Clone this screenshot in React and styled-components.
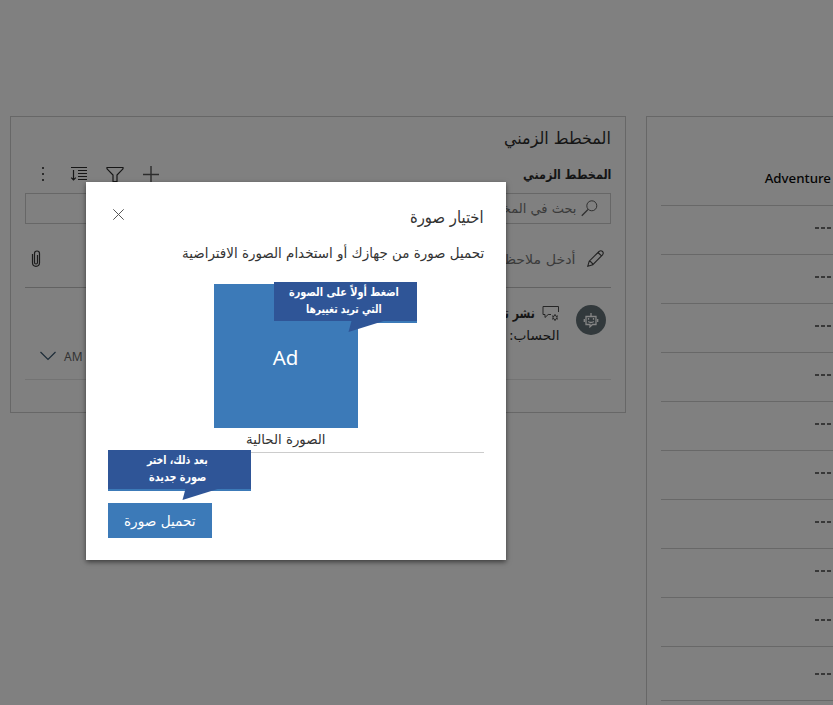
import React, { useLayoutEffect, useRef, useState } from "react";
import styled, { createGlobalStyle } from "styled-components";

const Global = createGlobalStyle`
  * { box-sizing: border-box; }
  html, body { margin: 0; height: 100%; overflow: hidden; background: #808080; }
  body { font-family: "Segoe UI", "Noto Sans", "DejaVu Sans", sans-serif; }
`;

const Page = styled.div`
  position: relative;
  width: 833px;
  height: 705px;
  padding: 116px 0 0 10px;
  display: flex;
  align-items: flex-start;
  gap: 20px;
  overflow: hidden;
  background: #808080;
  color: #151515;
`;

const TimelineCard = styled.section`
  width: 616px;
  height: 297px;
  flex: none;
  border: 1px solid #676767;
  padding: 9px 14px 0;
  display: flex;
  flex-direction: column;
`;

const Line = styled.div`
  display: flex;
  align-items: center;
  direction: rtl;
  height: ${(p) => p.$h}px;
  flex: none;
`;

const TitleLine = styled(Line)`
  justify-content: flex-start;
`;

const ToolLine = styled(Line)`
  justify-content: space-between;
  padding-top: 5px;
`;

const Tools = styled.div`
  direction: ltr;
  display: flex;
  align-items: center;
  gap: 18px;
  padding-left: 9px;
`;

const SearchField = styled(Line)`
  border: 1px solid #676767;
  padding: 0 12px 0 0;
  gap: 5px;
  color: #3b3b3b;
`;

const NoteLine = styled(Line)`
  justify-content: space-between;
  border-bottom: 1px solid #626262;
  padding: 6px 7px 0 5px;
  color: #3b3b3b;
`;

const NoteHint = styled.div`
  display: flex;
  align-items: center;
  gap: 11px;
`;

const Entry = styled.div`
  direction: rtl;
  height: 92px;
  border-bottom: 1px solid #737373;
  padding: 15px 5px 0 15px;
  display: flex;
  gap: 16px;
`;

const Avatar = styled.div`
  width: 30px;
  height: 30px;
  margin-top: 2px;
  border-radius: 50%;
  background: #32393c;
  display: grid;
  place-items: center;
`;

const EntryBody = styled.div`
  flex: 1;
  display: flex;
  flex-direction: column;
`;

const EntryTitle = styled.div`
  display: flex;
  align-items: center;
  height: 20px;
  gap: 7px;
`;

const EntryTime = styled.div`
  direction: ltr;
  display: flex;
  align-items: center;
  gap: 8px;
  height: 20px;
  margin-top: -1px;
  font-size: 12px;
  color: #333;
`;

const RecordCard = styled.section`
  width: 300px;
  height: 700px;
  flex: none;
  border: 1px solid #676767;
  padding: 33px 0 0 14px;
`;

const RecordRow = styled.div`
  width: 172px;
  height: ${(p) => p.$h || 49}px;
  border-bottom: 1px solid #686868;
  display: flex;
  align-items: center;
  justify-content: flex-end;
  padding: 0 2px ${(p) => p.$lift ?? 5}px 0;
`;

const RecordHead = styled(RecordRow)`
  height: 56px;
  padding: 0 2px 0 0;
  font: 500 13.3px "Noto Sans", sans-serif;
  color: #050505;
`;

const Dash = styled.i`
  display: block;
  width: 4px;
  height: 2px;
  background: #383838;
  margin-left: 2px;
`;

const Dialog = styled.div`
  position: absolute;
  left: 86px;
  top: 182px;
  width: 420px;
  height: 378px;
  padding: 22px;
  background: #fff;
  box-shadow: 0 2px 5px rgba(0, 0, 0, 0.55);
  color: #333;
  display: flex;
  flex-direction: column;
`;

const DialogHead = styled(Line)`
  justify-content: space-between;
  align-items: flex-start;
  padding: 1px 0 0 5px;
`;

const CloseButton = styled.button`
  border: 0;
  padding: 4px 0 0;
  background: none;
  display: flex;
`;

const Description = styled(Line)`
  padding-top: 14px;
`;

const Current = styled.div`
  height: 171px;
  margin-top: 18px;
  padding-left: 106px;
  border-bottom: 1px solid #ccc;
  display: flex;
  flex-direction: column;
`;

const Tile = styled.div`
  position: relative;
  width: 144px;
  height: 144px;
  padding: 2px 1px 0 0;
  background: #3c7ab8;
  color: #fff;
  font: 20.5px "Noto Sans", sans-serif;
  display: grid;
  place-items: center;
`;

const Caption = styled(Line)`
  width: 144px;
  justify-content: center;
`;

const Actions = styled.div`
  position: relative;
  margin-top: 50px;
  display: flex;
`;

const UploadButton = styled.button`
  width: 104px;
  height: 35px;
  border: 0;
  padding: 0;
  background: #3c7ab8;
  color: #fff;
  font-family: inherit;
  display: flex;
  align-items: center;
  justify-content: center;
`;

const Callout = styled.div`
  position: absolute;
  left: ${(p) => p.$x}px;
  top: ${(p) => p.$y}px;
  width: 143px;
  height: 41px;
  padding: 2px 4px 0 0;
  background: #2f5597;
  border-bottom: 2px solid #3c7ab8;
  color: #fff;
  display: flex;
  flex-direction: column;
  align-items: center;
`;

const Tail = styled.svg`
  position: absolute;
  left: 74px;
  top: 37px;
`;

const Slot = styled.span`
  display: flex;
  flex: none;
  direction: rtl;
  width: ${(p) => p.$w}px;
  height: ${(p) => p.$lh || 17}px;
  line-height: ${(p) => p.$lh || 17}px;
  font-size: ${(p) => p.$size}px;
  font-weight: ${(p) => (p.$bold ? 700 : 400)};
  font-family: "DejaVu Sans", sans-serif;
`;

const Glyphs = styled.span`
  flex: none;
  white-space: nowrap;
  transform-origin: right center;
`;

// Condenses an Arabic label horizontally so that it fills its slot.
function Label({ w, size = 13.5, lh, bold, children }) {
  const ref = useRef(null);
  const [k, setK] = useState(1);
  useLayoutEffect(() => {
    setK(w / ref.current.offsetWidth);
  }, [w, size, children]);
  return (
    <Slot $w={w} $size={size} $lh={lh} $bold={bold}>
      <Glyphs ref={ref} style={{ transform: `scaleX(${k})` }}>{children}</Glyphs>
    </Slot>
  );
}

const Icon = styled.svg`
  display: block;
  flex: none;
  fill: none;
  stroke: ${(p) => p.$c || "#161616"};
  stroke-width: ${(p) => p.$sw || 1};
`;

const MoreIcon = () => (
  <Icon width="18" height="18" viewBox="0 0 18 18" $c="#2c2c2c">
    <path d="M8 3h2M8 9h2M8 15h2" strokeWidth="2" />
  </Icon>
);
const SortIcon = () => (
  <Icon width="18" height="18" viewBox="0 0 18 18" $sw="1.2">
    <path d="M1 2.5h16M8 5.5h9M8 8.5h9M8 11.5h9M8 14.5h9M3.5 5v10M1.2 12.7l2.3 2.3 2.3-2.3" />
  </Icon>
);
const FilterIcon = () => (
  <Icon width="18" height="18" viewBox="0 0 18 18" $sw="1.2">
    <path d="M1 2.5h16v1.3L11 10v6.5H7V10L1 3.8z" />
  </Icon>
);
const PlusIcon = () => (
  <Icon width="18" height="18" viewBox="0 0 18 18" $c="#2c2c2c" $sw="1.4">
    <path d="M1 9.5h16M9 1v16" />
  </Icon>
);
const SearchIcon = () => (
  <Icon width="17" height="17" viewBox="0 0 17 17" $c="#303030">
    <circle cx="10.8" cy="5.8" r="5" />
    <path d="M7 9.5L.8 15.8" strokeWidth="1.3" />
  </Icon>
);
const PencilIcon = () => (
  <Icon width="17" height="17" viewBox="0 0 17 17" $c="#222" $sw="1.1">
    <path d="M.8 16.2l1.4-5L12 1.5q2-1.5 3.5 0t0 3.4L5.8 14.7zM2.2 11.2q2.8.3 3.6 3.5M11 2.5l3.5 3.4" />
  </Icon>
);
const ClipIcon = () => (
  <Icon width="12" height="18" viewBox="0 0 12 18" $c="#1b1b1b" $sw="1.2">
    <path d="M2.5 4v8.8a3.5 3.5 0 0 0 7 0V3.5a2.5 2.5 0 0 0-5 0v9a1.5 1.5 0 0 0 3 0V5" />
  </Icon>
);
const PostIcon = () => (
  <Icon width="18" height="18" viewBox="0 0 18 18" $c="#262626">
    <path d="M9 10.5H6.2L3 13.5v-3H1v-8h15.5V8" />
    <circle cx="13" cy="13.5" r="2" />
    <path d="M13 10v1.5M13 15.5V17M10 11.8l1.3.7M14.7 14.5l1.3.7M10 15.2l1.3-.7M14.7 12.5l1.3-.7" />
  </Icon>
);
const BotIcon = () => (
  <Icon width="16" height="16" viewBox="0 0 16 16" $c="#858585" $sw="1.3">
    <path d="M3 4.5h10v8H9.5L7 14.8v-2.3H3zM8 1v3.5M1.3 7v3M14.7 7v3M5.2 9.5q2.8 2 5.6 0" />
    <path d="M5.5 6v1.8M10.5 6v1.8" />
  </Icon>
);
const ChevronIcon = () => (
  <Icon width="16" height="10" viewBox="0 0 16 10" $c="#1d2c38" $sw="1.2">
    <path d="M.5 1L8 8.5 15.5 1" />
  </Icon>
);
const CloseIcon = () => (
  <Icon width="11" height="11" viewBox="0 0 11 11" $c="#555">
    <path d="M.3.3l10.4 10.4M10.7.3L.3 10.7" />
  </Icon>
);

const CalloutTail = () => (
  <Tail width="46" height="14" viewBox="0 0 46 14">
    <path d="M4 0L.5 13 42 0z" fill="#2f5597" />
  </Tail>
);

const Dashes = () => (
  <>
    <Dash />
    <Dash />
    <Dash />
  </>
);

export default function App() {
  return (
    <>
      <Global />
      <Page>
        <TimelineCard>
          <TitleLine $h={24}>
            <Label w={107} size={17} lh={24}>المخطط الزمني</Label>
          </TitleLine>
          <ToolLine $h={43}>
            <Label w={88} size={13} bold>المخطط الزمني</Label>
            <Tools>
              <MoreIcon />
              <SortIcon />
              <FilterIcon />
              <PlusIcon />
            </Tools>
          </ToolLine>
          <SearchField $h={31}>
            <SearchIcon />
            <Label w={137} lh={19}>بحث في المخطط الزمني</Label>
          </SearchField>
          <NoteLine $h={64}>
            <NoteHint>
              <PencilIcon />
              <Label w={79} lh={22}>أدخل ملاحظة</Label>
            </NoteHint>
            <ClipIcon />
          </NoteLine>
          <Entry>
            <Avatar><BotIcon /></Avatar>
            <EntryBody>
              <EntryTitle>
                <PostIcon />
                <Label w={62} size={14} bold>نشر تلقائي</Label>
              </EntryTitle>
              <Label w={81} lh={24}>الحساب: مثال</Label>
              <EntryTime>
                <ChevronIcon />
                AM
              </EntryTime>
            </EntryBody>
          </Entry>
        </TimelineCard>

        <RecordCard>
          <RecordHead>Adventure</RecordHead>
          {Array.from({ length: 9 }, (_, i) => (
            <RecordRow key={i}><Dashes /></RecordRow>
          ))}
          <RecordRow $h={54} $lift={0}><Dashes /></RecordRow>
        </RecordCard>

        <Dialog>
          <DialogHead $h={22}>
            <Label w={74} size={17} lh={24}>اختيار صورة</Label>
            <CloseButton><CloseIcon /></CloseButton>
          </DialogHead>
          <Description $h={40}>
            <Label w={302} size={14}>تحميل صورة من جهازك أو استخدام الصورة الافتراضية</Label>
          </Description>
          <Current>
            <Tile>
              Ad
              <Callout $x={60} $y={-2}>
                <Label w={110} size={11.5} bold>اضغط أولاً على الصورة</Label>
                <Label w={76} size={11.5} bold>التي تريد تغييرها</Label>
                <CalloutTail />
              </Callout>
            </Tile>
            <Caption $h={22}>
              <Label w={80}>الصورة الحالية</Label>
            </Caption>
          </Current>
          <Actions>
            <UploadButton>
              <Label w={72} size={14} lh={20}>تحميل صورة</Label>
            </UploadButton>
            <Callout $x={0} $y={-53}>
              <Label w={61} size={11.5} bold>بعد ذلك، اختر</Label>
              <Label w={57} size={11.5} bold>صورة جديدة</Label>
              <CalloutTail />
            </Callout>
          </Actions>
        </Dialog>
      </Page>
    </>
  );
}
